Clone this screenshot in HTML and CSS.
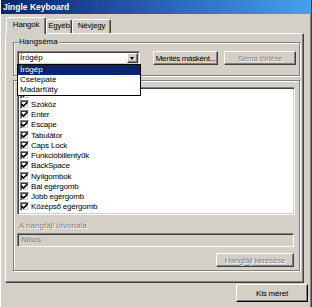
FILE: index.html
```html
<!DOCTYPE html>
<html lang="hu">
<head>
  <meta charset="UTF-8" />
  <meta name="viewport" content="width=device-width, initial-scale=1.0" />
  <title>Jingle Keyboard</title>
  <link rel="stylesheet" href="styles.css">
</head>
<body>
  <div class="window">
    <div class="titlebar">Jingle Keyboard</div>

    <div class="content">
      <div class="tabs">
        <div class="tab active">Hangok</div>
        <div class="tab tab-egyeb">Egyéb</div>
        <div class="tab tab-nevjegy">Névjegy</div>
      </div>

      <div class="panel">
        <div class="group group-sema">
          <span class="legend">Hangséma</span>
          <div class="row">
            <div class="combo">
              <span class="combo-text">Írógép</span>
              <span class="combo-arrow"></span>
              <ul class="dropdown">
                <li class="selected">Írógép</li>
                <li>Csetepaté</li>
                <li>Madárfütty</li>
              </ul>
            </div>
            <button class="btn btn-save">Mentés másként...</button>
            <button class="btn btn-delete" disabled>Séma törlése</button>
          </div>
        </div>

        <div class="group group-keys">
          <div class="checklist">
            <!-- az első sort a lenyíló lista takarja -->
            <div class="item"><span class="check"></span></div>
            <div class="item"><span class="check"></span>Szóköz</div>
            <div class="item"><span class="check"></span>Enter</div>
            <div class="item"><span class="check"></span>Escape</div>
            <div class="item"><span class="check"></span>Tabulátor</div>
            <div class="item"><span class="check"></span>Caps Lock</div>
            <div class="item"><span class="check"></span>Funkcióbillentyűk</div>
            <div class="item"><span class="check"></span>BackSpace</div>
            <div class="item"><span class="check"></span>Nyílgombok</div>
            <div class="item"><span class="check"></span>Bal egérgomb</div>
            <div class="item"><span class="check"></span>Jobb egérgomb</div>
            <div class="item"><span class="check"></span>Középső egérgomb</div>
          </div>

          <div class="field-label">A hangfájl útvonala</div>
          <div class="field">Nincs</div>
          <button class="btn btn-browse" disabled>Hangfájl keresése</button>
        </div>
      </div>

      <div class="footer">
        <button class="btn btn-small">Kis méret</button>
      </div>
    </div>
  </div>

  <script>
    // pipák a listába
    document.querySelectorAll(".check").forEach((box) => {
      box.innerHTML =
        '<svg viewBox="0 0 7 7" width="7" height="7"><polyline points="0.5,3 2.5,5 6.5,1" fill="none" stroke="#000" stroke-width="1.6"/></svg>';
    });
  </script>
</body>
</html>
```

FILE: styles.css
```css
* {
  box-sizing: border-box;
}

body {
  margin: 0;
  background-color: #d4d0c8;
  font-family: "Liberation Sans", Arial, sans-serif;
  font-size: 8px;
  color: #000;
}

.window {
  width: 312px;
  height: 307px;
  display: flex;
  flex-direction: column;
  border-left: 1px solid #fff;
  border-right: 1px solid #404040;
  box-shadow: inset -1px 0 0 #808080;
  overflow: hidden;
}

.titlebar {
  height: 14px;
  margin: 0 -1px;
  padding-left: 3px;
  line-height: 14px;
  font-size: 8.5px;
  font-weight: bold;
  color: #fff;
  background: linear-gradient(90deg, #0a246a 0%, #2a66bd 55%, #45a2ea 100%);
}

.content {
  padding: 3px 0 0 4px;
  display: flex;
  flex-direction: column;
}

/* fülek */
.tabs {
  display: flex;
  align-items: flex-end;
  height: 16px;
  padding-left: 1px;
  position: relative;
  z-index: 1;
}

.tab {
  height: 14px;
  line-height: 12px;
  text-align: center;
  white-space: nowrap;
  letter-spacing: -0.2px;
  background-color: #d4d0c8;
  border-top: 1px solid #fff;
  border-left: 1px solid #fff;
  border-right: 1px solid #404040;
  border-radius: 2px 2px 0 0;
  box-shadow: inset -1px 0 0 #808080;
  width: 40px;
}

.tab.active {
  height: 17px;
  margin-bottom: -1px;
  line-height: 14px;
}

.tab-egyeb {
  width: 26px;
}

.tab-nevjegy {
  width: 39px;
}

.panel {
  width: 299px;
  height: 250px;
  padding: 8px 0 0 7px;
  border: 1px solid;
  border-color: #fff #404040 #404040 #fff;
  box-shadow: inset -1px -1px 0 #808080;
}

/* csoportdobozok */
.group {
  position: relative;
  width: 287px;
  border: 1px solid #808080;
  box-shadow: inset 1px 1px 0 #fff, 1px 1px 0 #fff;
}

.legend {
  position: absolute;
  top: -6px;
  left: 4px;
  padding: 0 1px;
  line-height: 10px;
  background-color: #d4d0c8;
}

.group-sema {
  height: 34px;
  padding: 8px 0 0 3px;
}

.row {
  display: flex;
  align-items: flex-start;
}

.combo {
  position: relative;
  width: 123px;
  height: 14px;
  display: flex;
  align-items: center;
  background-color: #fff;
  border: 1px solid;
  border-color: #808080 #fff #fff #808080;
  box-shadow: inset 1px 1px 0 #404040, inset -1px -1px 0 #d4d0c8;
}

.combo-text {
  flex: 1;
  padding-left: 2px;
  line-height: 10px;
}

.combo-arrow {
  position: relative;
  width: 11px;
  height: 10px;
  margin-right: 1px;
  background-color: #d4d0c8;
  border: 1px solid;
  border-color: #fff #404040 #404040 #fff;
  box-shadow: inset -1px -1px 0 #808080;
}

.combo-arrow::after {
  content: "";
  position: absolute;
  left: 2px;
  top: 3px;
  border-left: 2.5px solid transparent;
  border-right: 2.5px solid transparent;
  border-top: 3px solid #000;
}

.dropdown {
  position: absolute;
  top: 12px;
  left: -1px;
  width: 124px;
  height: 32px;
  margin: 0;
  padding: 0;
  list-style: none;
  background-color: #fff;
  border: 1px solid #000;
  z-index: 2;
}

.dropdown li {
  height: 10px;
  line-height: 10px;
  padding-left: 2px;
}

.dropdown li.selected {
  background-color: #0a246a;
  color: #fff;
}

/* gombok */
.btn {
  height: 14px;
  padding: 0;
  font-family: inherit;
  font-size: 8px;
  letter-spacing: -0.2px;
  white-space: nowrap;
  overflow: hidden;
  color: #000;
  background-color: #d4d0c8;
  border: 1px solid;
  border-color: #fff #404040 #404040 #fff;
  box-shadow: inset -1px -1px 0 #808080;
}

.btn:disabled {
  color: #808080;
  text-shadow: 1px 1px 0 #fff;
}

.btn-save {
  width: 65px;
  margin-left: 13px;
  letter-spacing: -0.35px;
}

.btn-delete {
  width: 72px;
  margin-left: 6px;
}

.group-keys {
  height: 191px;
  margin-top: 4px;
  padding: 6px 0 0 3px;
  display: flex;
  flex-direction: column;
}

.checklist {
  width: 278px;
  height: 128px;
  padding: 1px 0 0 2px;
  background-color: #fff;
  border: 1px solid;
  border-color: #808080 #fff #fff #808080;
  box-shadow: inset 1px 1px 0 #404040, inset -1px -1px 0 #d4d0c8;
}

.item {
  height: 10.25px;
  display: flex;
  align-items: center;
  letter-spacing: -0.2px;
}

.check {
  width: 9px;
  height: 9px;
  margin-right: 2px;
  display: flex;
  align-items: center;
  justify-content: center;
  background-color: #fff;
  border: 1px solid;
  border-color: #808080 #fff #fff #808080;
  box-shadow: inset 1px 1px 0 #404040, inset -1px -1px 0 #d4d0c8;
}

.field-label {
  margin-top: 6px;
  padding-left: 2px;
  line-height: 10px;
  color: #808080;
  text-shadow: 1px 1px 0 #fff;
}

.field {
  width: 277px;
  height: 14px;
  margin-top: 2px;
  padding-left: 3px;
  line-height: 12px;
  color: #808080;
  border: 1px solid;
  border-color: #808080 #fff #fff #808080;
  box-shadow: inset 1px 1px 0 #404040, inset -1px -1px 0 #d4d0c8;
}

.btn-browse {
  width: 78px;
  margin-top: 6px;
  margin-left: 199px;
}

.footer {
  display: flex;
  justify-content: flex-end;
  padding-right: 3px;
  margin-top: 1px;
}

.btn-small {
  width: 72px;
  height: 18px;
  border-color: #fff #000 #000 #fff;
  box-shadow: inset -1px -1px 0 #808080;
}
```
